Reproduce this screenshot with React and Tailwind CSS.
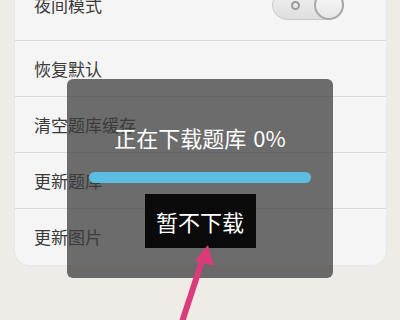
import React from 'react';

const rows = ['恢复默认', '清空题库缓存', '更新题库', '更新图片'];

const font = { fontFamily: '"Noto Sans CJK SC", "Noto Sans", sans-serif' };

export default function App() {
  return (
    <div className="relative w-[400px] h-[320px] overflow-hidden bg-[#efebe7]" style={font}>
      <div className="ml-[15px] mt-[-31px] w-[371px] rounded-b-[14px] bg-[#f5f5f5] shadow-[0_0_2px_rgba(0,0,0,0.08)]">
        <div className="h-[72px] flex items-center justify-between pl-[19px] pr-[42px] border-b border-[#dcdcdc]">
          <span className="text-[17px] text-[#3a3a3a]">夜间模式</span>
          <div className="relative w-[72px] h-[30px] rounded-full bg-gradient-to-b from-[#f2f2f2] to-[#dedede] border border-[#c9c9c9]">
            <div className="absolute left-[18px] top-[10px] w-[9px] h-[9px] rounded-full border-2 border-[#9a9a9a]" />
            <div className="absolute right-[-1px] top-[-1px] w-[30px] h-[30px] rounded-full bg-gradient-to-b from-[#fafafa] to-[#e6e6e6] border-2 border-[#a8a8a8]" />
          </div>
        </div>
        {rows.map((r, i) => (
          <div
            key={r}
            className={`h-[56px] flex items-center pl-[19px] ${i < rows.length - 1 ? 'border-b border-[#dcdcdc]' : ''}`}
          >
            <span className="text-[17px] text-[#3a3a3a]">{r}</span>
          </div>
        ))}
      </div>

      <div className="absolute left-[67px] top-[79px] w-[266px] h-[199px] rounded-[6px] bg-[rgba(60,60,60,0.74)] flex flex-col items-center">
        <div className="mt-[44px] h-[28px] flex items-center gap-[7px] text-[22px] text-white leading-none">
          <span>正在下载题库</span>
          <span>0%</span>
        </div>
        <div className="mt-[21px] w-[222px] h-[11px] rounded-full bg-[#5bbde2]" />
        <div className="mt-[11px] w-[111px] h-[54px] bg-[#0a0a0a] flex items-center justify-center text-[22px] text-white leading-none">
          暂不下载
        </div>
      </div>

      <svg className="absolute left-0 top-0" width="400" height="320" viewBox="0 0 400 320">
        <line x1="182" y1="322" x2="203" y2="258" stroke="#db3a7b" strokeWidth="6" />
        <polygon points="208,245 214,266 195,260" fill="#db3a7b" />
      </svg>
    </div>
  );
}
